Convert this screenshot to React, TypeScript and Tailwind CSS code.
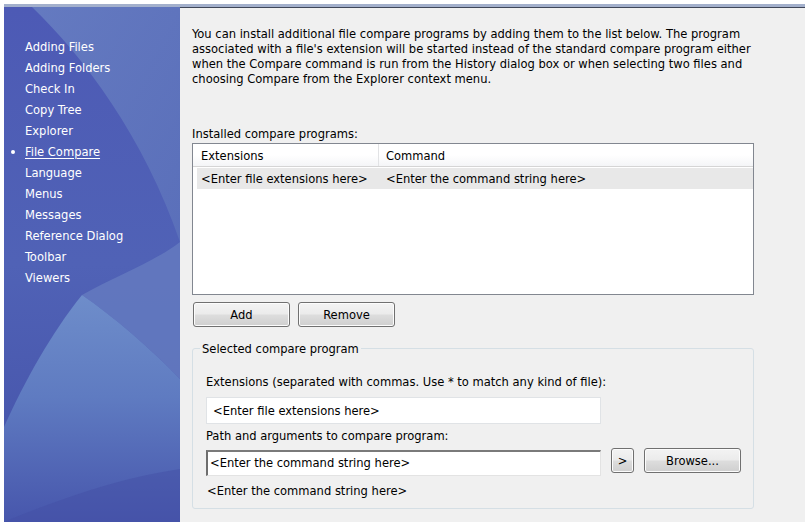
import React from 'react';

const navItems = [
  'Adding Files',
  'Adding Folders',
  'Check In',
  'Copy Tree',
  'Explorer',
  'File Compare',
  'Language',
  'Menus',
  'Messages',
  'Reference Dialog',
  'Toolbar',
  'Viewers',
];

const font = { fontFamily: '"DejaVu Sans Condensed", "DejaVu Sans", Tahoma, sans-serif' };

const btn =
  'h-[25px] rounded-[3px] border border-[#707070] bg-[linear-gradient(to_bottom,#f3f3f3_0%,#ebebeb_48%,#dddddd_52%,#cfcfcf_100%)] shadow-[inset_0_0_0_1px_#fcfcfc] text-[12.8px] text-black flex items-center justify-center';

const SidebarArt = () => (
  <svg className="absolute inset-0 w-full h-full" viewBox="0 0 176 515" preserveAspectRatio="none">
    <defs>
      <linearGradient id="base" x1="0" y1="0" x2="0" y2="1">
        <stop offset="0" stopColor="#4d5ab5" />
        <stop offset="0.5" stopColor="#5062b6" />
        <stop offset="1" stopColor="#4451a8" />
      </linearGradient>
      <linearGradient id="swoosh" x1="0" y1="0" x2="1" y2="1">
        <stop offset="0" stopColor="#6a82c3" />
        <stop offset="1" stopColor="#5d73bb" />
      </linearGradient>
      <linearGradient id="cone" x1="0" y1="0" x2="0" y2="1">
        <stop offset="0" stopColor="#6e8dca" />
        <stop offset="0.45" stopColor="#5f7bc1" />
        <stop offset="1" stopColor="#4756ac" />
      </linearGradient>
    </defs>
    <rect x="0" y="0" width="176" height="515" fill="url(#base)" />
    <path d="M28 0 C 80 50, 140 130, 176 235 L 176 0 Z" fill="url(#swoosh)" opacity="0.8" />
    <path d="M176 235 C 150 255, 110 270, 78 288 C 110 310, 145 340, 176 372 Z" fill="#647ac0" opacity="0.85" />
    <path d="M78 288 C 48 325, 20 375, 0 420 L 0 515 L 176 515 L 176 372 C 145 340, 110 310, 78 288 Z" fill="url(#cone)" />
    <path d="M0 515 C 60 490, 120 470, 176 462 L 176 515 Z" fill="#4350a6" opacity="0.5" />
  </svg>
);

export default function App() {
  return (
    <div className="w-[808px] h-[530px] bg-white pt-[4px] pl-[4px]" style={font}>
      <div className="w-[801px] h-[518px] flex flex-col">
        <div className="h-[3px] bg-[#a3b0cc]" />
        <div className="flex flex-1 min-h-0">
          {/* Sidebar */}
          <div className="relative w-[176px] overflow-hidden">
            <SidebarArt />
            <ul className="relative pt-[29px] pl-[21px] text-[12.8px] text-white">
              {navItems.map((item) => (
                <li key={item} className="relative h-[21px] leading-[21px]">
                  {item === 'File Compare' && (
                    <span className="absolute left-[-14px] top-[9px] w-[4px] h-[4px] rounded-full bg-white" />
                  )}
                  <span className={item === 'File Compare' ? 'underline underline-offset-2' : ''}>{item}</span>
                </li>
              ))}
            </ul>
          </div>

          {/* Content */}
          <div className="flex-1 bg-[#f0f0f0] border-t border-[#3f4658] pl-[12px] pt-[18px] text-[12.8px] text-black">
            <p className="w-[600px] leading-[15px] whitespace-nowrap">
              You can install additional file compare programs by adding them to the list below. The program
              <br />
              associated with a file's extension will be started instead of the standard compare program either
              <br />
              when the Compare command is run from the History dialog box or when selecting two files and
              <br />
              choosing Compare from the Explorer context menu.
            </p>

            <div className="mt-[40px] leading-[15px]">Installed compare programs:</div>

            <div className="mt-[2px] w-[562px] h-[152px] border border-[#828790] bg-white">
              <div className="flex h-[23px] bg-[linear-gradient(to_bottom,#ffffff_0%,#ffffff_50%,#f4f5f7_100%)] border-b border-[#d5d5d5]">
                <div className="w-[186px] pl-[8px] pt-[2px] flex items-center border-r border-[#e2e3e5]">Extensions</div>
                <div className="flex-1 pl-[7px] pt-[2px] flex items-center">Command</div>
              </div>
              <div className="flex h-[21px] mt-[1px] ml-[4px] bg-[#e8e8e8]">
                <div className="w-[182px] pl-[4px] flex items-center">&lt;Enter file extensions here&gt;</div>
                <div className="flex-1 pl-[7px] flex items-center">&lt;Enter the command string here&gt;</div>
              </div>
            </div>

            <div className="mt-[7px] flex gap-[8px] pl-[1px]">
              <button className={`${btn} w-[97px]`}>Add</button>
              <button className={`${btn} w-[97px]`}>Remove</button>
            </div>

            <div className="relative mt-[21px] w-[562px] border border-[#d5dfe5] rounded-[3px] pl-[13px] pt-[25px] pb-[10px]">
              <span className="absolute left-[7px] top-[-8px] px-[2px] leading-[15px] bg-[#f0f0f0]">
                Selected compare program
              </span>
              <div className="leading-[15px]">Extensions (separated with commas. Use * to match any kind of file):</div>
              <div className="mt-[8px] w-[395px] h-[27px] bg-white border border-[#e0e3e6] pl-[6px] flex items-center">
                &lt;Enter file extensions here&gt;
              </div>
              <div className="mt-[4px] leading-[15px]">Path and arguments to compare program:</div>
              <div className="mt-[5px] flex items-start">
                <div className="mt-[2px] w-[395px] h-[26px] bg-white border-l-2 border-t-2 border-r border-b border-l-[#6e6e6e] border-t-[#7a7a7a] border-r-[#e3e3e3] border-b-[#e3e3e3] pl-[2px] pb-[2px] flex items-center">
                  &lt;Enter the command string here&gt;
                </div>
                <button className={`${btn} ml-[10px] w-[23px]`}>&gt;</button>
                <button className={`${btn} ml-[10px] w-[97px]`}>Browse...</button>
              </div>
              <div className="mt-[7px] pl-[1px] leading-[15px]">&lt;Enter the command string here&gt;</div>
            </div>
          </div>
        </div>
      </div>
    </div>
  );
}
